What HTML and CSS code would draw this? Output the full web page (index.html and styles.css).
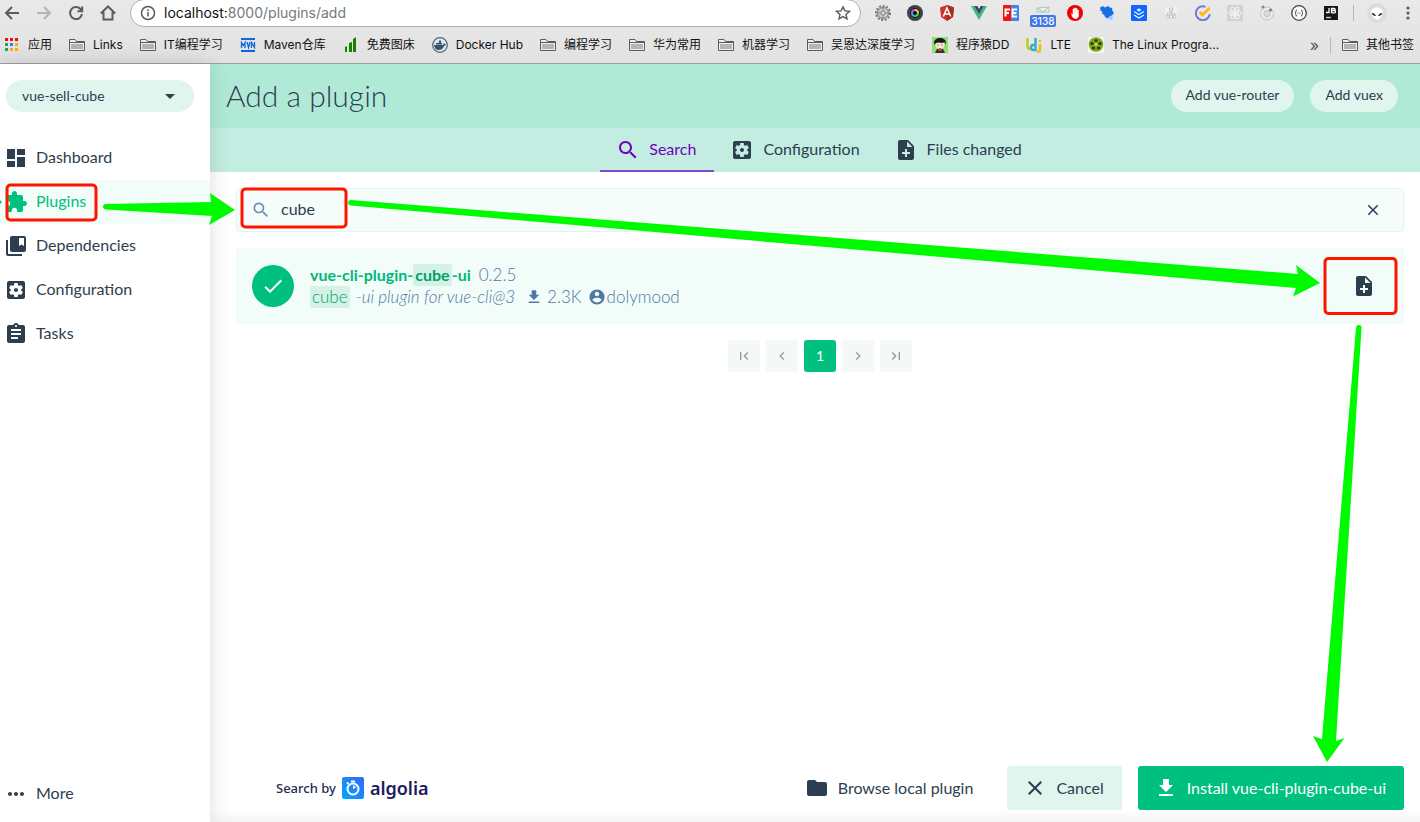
FILE: index.html
```html
<!DOCTYPE html>
<html lang="zh-CN">
<head>
<meta charset="utf-8">
<title>Add a plugin</title>
<link rel="stylesheet" href="styles.css">
</head>
<body>
<svg class="sprite" aria-hidden="true">
  <symbol id="dashboard" viewBox="0 0 24 24"><path d="M3 13h8V3H3v10zm0 8h8v-6H3v6zm10 0h8V11h-8v10zm0-18v6h8V3h-8z"/></symbol>
  <symbol id="extension" viewBox="0 0 24 24"><path d="M20.5 11H19V7c0-1.1-.9-2-2-2h-4V3.500C13 2.120 11.880 1 10.500 1S8 2.120 8 3.500V5H4c-1.100 0-1.990.900-1.990 2v3.800H3.500c1.490 0 2.700 1.210 2.700 2.700s-1.210 2.700-2.700 2.700H2V20c0 1.100.900 2 2 2h3.800v-1.500c0-1.490 1.210-2.700 2.700-2.700 1.490 0 2.700 1.210 2.700 2.700V22H17c1.100 0 2-.900 2-2v-4h1.500c1.380 0 2.500-1.120 2.500-2.500S21.880 11 20.500 11z"/></symbol>
  <symbol id="collections" viewBox="0 0 24 24"><path d="M4 6H2v14c0 1.100.900 2 2 2h14v-2H4V6z"/><path d="M20 2H8c-1.100 0-2 .900-2 2v12c0 1.100.900 2 2 2h12c1.100 0 2-.900 2-2V4c0-1.100-.900-2-2-2zm0 10l-2.500-1.500L15 12V4h5v8z"/></symbol>
  <symbol id="settings" viewBox="0 0 24 24"><path d="M12 10c-1.100 0-2 .9-2 2s.9 2 2 2 2-.9 2-2-.9-2-2-2zm7-7H5c-1.110 0-2 .9-2 2v14c0 1.100.89 2 2 2h14c1.110 0 2-.9 2-2V5c0-1.100-.89-2-2-2zm-1.750 9c0 .23-.02.46-.05.68l1.480 1.160c.13.11.17.3.08.45l-1.400 2.420c-.09.15-.27.21-.43.15l-1.740-.7c-.36.28-.76.51-1.180.69l-.26 1.850c-.03.17-.18.3-.35.3h-2.800c-.17 0-.32-.13-.35-.29l-.26-1.850c-.43-.18-.82-.41-1.180-.69l-1.740.7c-.16.06-.34 0-.43-.15l-1.400-2.420c-.09-.15-.05-.34.08-.45l1.480-1.160c-.03-.23-.05-.46-.05-.69 0-.23.02-.46.05-.68l-1.480-1.160c-.13-.11-.17-.3-.08-.45l1.400-2.420c.09-.15.27-.21.43-.15l1.740.7c.36-.28.76-.51 1.180-.69l.26-1.850c.03-.17.18-.3.35-.3h2.800c.17 0 .32.13.35.29l.26 1.850c.43.18.82.41 1.180.69l1.740-.7c.16-.06.34 0 .43.15l1.400 2.420c.09.15.05.34-.08.45l-1.480 1.160c.03.23.05.46.05.69z"/></symbol>
  <symbol id="assignment" viewBox="0 0 24 24"><path d="M19 3h-4.180C14.400 1.840 13.300 1 12 1c-1.300 0-2.400.84-2.820 2H5c-1.100 0-2 .9-2 2v14c0 1.100.9 2 2 2h14c1.100 0 2-.9 2-2V5c0-1.100-.9-2-2-2zm-7 0c.55 0 1 .45 1 1s-.45 1-1 1-1-.45-1-1 .45-1 1-1zm2 14H7v-2h7v2zm3-4H7v-2h10v2zm0-4H7V7h10v2z"/></symbol>
  <symbol id="noteadd" viewBox="0 0 24 24"><path d="M14 2H6c-1.100 0-1.990.9-1.990 2L4 20c0 1.100.89 2 1.990 2H18c1.100 0 2-.9 2-2V8l-6-6zm2 14h-3v3h-2v-3H8v-2h3v-3h2v3h3v2zm-3-7V3.500L18.500 9H13z"/></symbol>
  <symbol id="search" viewBox="0 0 24 24"><path d="M15.500 14h-.79l-.28-.27C15.410 12.590 16 11.110 16 9.500 16 5.910 13.090 3 9.500 3S3 5.910 3 9.500 5.910 16 9.500 16c1.610 0 3.090-.59 4.230-1.570l.27.28v.79l5 4.990L20.490 19l-4.990-5zm-6 0C7.010 14 5 11.990 5 9.500S7.010 5 9.500 5 14 7.010 14 9.500 11.990 14 9.500 14z"/></symbol>
  <symbol id="download" viewBox="0 0 24 24"><path d="M19 9h-4V3H9v6H5l7 7 7-7zM5 18v2h14v-2H5z"/></symbol>
  <symbol id="account" viewBox="0 0 24 24"><path d="M12 2C6.480 2 2 6.480 2 12s4.480 10 10 10 10-4.480 10-10S17.520 2 12 2zm0 3c1.660 0 3 1.340 3 3s-1.340 3-3 3-3-1.340-3-3 1.340-3 3-3zm0 14.200c-2.500 0-4.710-1.280-6-3.220.03-1.990 4-3.080 6-3.080 1.990 0 5.970 1.090 6 3.080-1.290 1.940-3.500 3.220-6 3.220z"/></symbol>
  <symbol id="close" viewBox="0 0 24 24"><path d="M19 6.410L17.590 5 12 10.590 6.410 5 5 6.410 10.590 12 5 17.590 6.410 19 12 13.410 17.590 19 19 17.590 13.410 12z"/></symbol>
  <symbol id="done" viewBox="0 0 24 24"><path d="M9 16.200L4.800 12l-1.400 1.400L9 19 21 7l-1.400-1.400L9 16.200z"/></symbol>
  <symbol id="more" viewBox="0 0 24 24"><path d="M6 10c-1.100 0-2 .9-2 2s.9 2 2 2 2-.9 2-2-.9-2-2-2zm12 0c-1.100 0-2 .9-2 2s.9 2 2 2 2-.9 2-2-.9-2-2-2zm-6 0c-1.100 0-2 .9-2 2s.9 2 2 2 2-.9 2-2-.9-2-2-2z"/></symbol>
  <symbol id="folder" viewBox="0 0 24 24"><path d="M10 4H4c-1.100 0-1.990.9-1.990 2L2 18c0 1.100.9 2 2 2h16c1.100 0 2-.9 2-2V8c0-1.100-.9-2-2-2h-8l-2-2z"/></symbol>
  <symbol id="dropdown" viewBox="0 0 24 24"><path d="M7 10l5 5 5-5z"/></symbol>
  <symbol id="first" viewBox="0 0 24 24"><path d="M18.410 16.590L13.820 12l4.590-4.590L17 6l-6 6 6 6zM6 6h2v12H6z"/></symbol>
  <symbol id="prev" viewBox="0 0 24 24"><path d="M15.410 7.410L14 6l-6 6 6 6 1.410-1.410L10.830 12z"/></symbol>
  <symbol id="next" viewBox="0 0 24 24"><path d="M10 6L8.590 7.410 13.170 12l-4.580 4.590L10 18l6-6z"/></symbol>
  <symbol id="last" viewBox="0 0 24 24"><path d="M5.590 7.410L10.180 12l-4.590 4.590L7 18l6-6-6-6zM16 6h2v12h-2z"/></symbol>
  <symbol id="bmfolder" viewBox="0 0 16 16"><path d="M.5 13.500v-11h5.500l1.500 2h8v9z" fill="#eee" stroke="#5c5c5c"/><path d="M2 7h12v5H2z" fill="#b5b5b5"/><path d="M.5 5.500h15" stroke="#5c5c5c"/></symbol>
</svg>

<header class="browser">
  <div class="toolbar">
    <nav class="history" aria-label="Browser">
      <button aria-label="Back"><svg class="nav-icon" viewBox="0 0 16 16"><path d="M15 8H2M8 2L2 8l6 6"/></svg></button>
      <button aria-label="Forward"><svg class="nav-icon faded" viewBox="0 0 16 16"><path d="M1 8h13M8 2l6 6-6 6"/></svg></button>
      <button aria-label="Reload"><svg class="nav-icon" viewBox="0 0 16 16"><path d="M14 9A6 6 0 1 1 12.500 4L14 5.500M14.200 1.500v4.700H9.500"/></svg></button>
      <button aria-label="Home"><svg class="nav-icon" viewBox="0 0 16 16"><path d="M.8 8.500L8 1.500l7.200 7M3.500 7v7.500h9V7"/></svg></button>
    </nav>
    <div class="address">
      <svg class="i16" viewBox="0 0 16 16" fill="none" stroke="#5a5a5a" stroke-width="1.500"><circle cx="8" cy="8" r="6.500"/><path d="M8 7v4.500M8 4.300v1.600"/></svg>
      <span class="url">localhost:<span class="url-rest">8000/plugins/add</span></span>
      <svg class="i16" viewBox="0 0 16 16" fill="none" stroke="#5a5a5a" stroke-width="1.400"><path d="M8 1.800l1.900 4.100 4.500.5-3.400 3 1 4.500L8 11.600l-4 2.300 1-4.500-3.400-3 4.500-.5z"/></svg>
    </div>
    <div class="extensions">
      <svg class="i16" viewBox="0 0 16 16"><circle cx="8" cy="8" r="7" fill="none" stroke="#777" stroke-width="2" stroke-dasharray="2 1.600"/><circle cx="8" cy="8" r="5.500" fill="#ccc" stroke="#777"/><circle cx="8" cy="8" r="2" fill="#eee" stroke="#777"/><path d="M8 2.500V6M8 10v3.500M2.500 8H6M10 8h3.500" stroke="#888"/></svg>
      <svg class="i16" viewBox="0 0 16 16"><circle cx="8" cy="8" r="8" fill="#3c414a"/><circle cx="8" cy="8" r="4.800" fill="#111"/><g fill="none" stroke-width="2"><path d="M5 8a3 3 0 0 1 3-3" stroke="#e04adf"/><path d="M8 5a3 3 0 0 1 3 3" stroke="#ffc928"/><path d="M11 8a3 3 0 0 1-3 3" stroke="#35df51"/><path d="M8 11a3 3 0 0 1-3-3" stroke="#26a9ff"/></g></svg>
      <svg class="i16" viewBox="0 0 16 16"><path d="M8 0l7 2.500-1 9.500-6 4-6-4L1 2.500z" fill="#cf3229"/><path d="M8 0l7 2.500-1 9.500-6 4z" fill="#a92b25"/><path d="M4.300 11.500L8 3l3.700 8.500M5.700 9h4.600" fill="none" stroke="#fff" stroke-width="1.500"/></svg>
      <svg class="i16" viewBox="0 0 16 16"><path d="M0 1h3.500L8 9l4.500-8H16L8 15z" fill="#41b883"/><path d="M3.300 1h3L8 4l1.700-3h3L8 9.200z" fill="#35495e"/></svg>
      <svg class="i16" viewBox="0 0 16 16"><path d="M1 0h7v16H1a1 1 0 0 1-1-1V1a1 1 0 0 1 1-1z" fill="#f21313"/><path d="M8 0h7a1 1 0 0 1 1 1v14a1 1 0 0 1-1 1H8z" fill="#4285e8"/><path d="M7 4.500H2.500v7M2.500 8H6M14 4.500H9.500v7H14M9.500 8h4" fill="none" stroke="#fff" stroke-width="2"/></svg>
      <span class="ext-badge"><svg class="i16" viewBox="0 0 16 16"><path d="M2 3l12-1v5H2z" fill="#ecefec" stroke="#a9c9b8"/><path d="M2 3l6 4 6-5" fill="none" stroke="#9fc3b0"/></svg><b>3138</b></span>
      <svg class="i16" viewBox="0 0 16 16"><circle cx="8" cy="8" r="8" fill="#f00000"/><path d="M4.500 8.500l1 3.500 2 1.500h2.500l1.500-2V5h-1v3h-.5V3.500H9V8h-.5V3H7.300v5H7V4H6v6z" fill="#fff" stroke="#fff" stroke-width=".6"/></svg>
      <svg class="i16" viewBox="0 0 16 16"><path d="M9 9h7v7H6z" fill="#d8e9fb"/><path d="M1 2.500L4 1l2 1.500L9 1l2 1.500 2 .5.500 3L15 8l-2 2.500-2 .5-2 2.500-3-1.500-1-2.500L3 9l.5-2-2-1.500z" fill="#1670e5"/><path d="M11 11l3 1-1 3-3-1z" fill="#95c9ff"/></svg>
      <svg class="i16" viewBox="0 0 16 16"><rect width="16" height="16" rx="1" fill="#1264ff"/><path d="M8 4l1.500 1L8 6 6.500 5zM3 6.500L8 9.500l5-3M3 10l5 3 5-3" fill="none" stroke="#dff" stroke-width="1.200"/></svg>
      <svg class="i16" viewBox="0 0 16 16"><rect x="2" y="2" width="12" height="12" rx="1" fill="#f1f1f1"/><path d="M6.500 3h3v3h-3zM3 10h3v3H3zM6.500 10h3v3h-3zM10 10h3v3h-3zM8 6v4M4.500 10V8h7v2" fill="none" stroke="#c0c0c0"/></svg>
      <svg class="i16" viewBox="0 0 16 16"><path d="M10.500 1.700A7 7 0 1 0 14.800 9" fill="none" stroke="#6b78e5" stroke-width="2"/><path d="M4.500 7l3 3L14.500 3" fill="none" stroke="#ffb900" stroke-width="2.600"/></svg>
      <svg class="i16" viewBox="0 0 16 16"><rect width="16" height="16" rx="1" fill="#d2d2d2"/><g fill="none" stroke="#f4f4f4"><ellipse cx="8" cy="8" rx="6.500" ry="2.500"/><ellipse cx="8" cy="8" rx="6.500" ry="2.500" transform="rotate(60 8 8)"/><ellipse cx="8" cy="8" rx="6.500" ry="2.500" transform="rotate(120 8 8)"/></g><circle cx="8" cy="8" r="1.500" fill="#fff"/></svg>
      <svg class="i16" viewBox="0 0 16 16"><circle cx="8" cy="8.500" r="6.500" fill="#ececec" stroke="#c4c4c4"/><circle cx="8" cy="8.500" r="3" fill="#ddd" stroke="#bbb"/><circle cx="4" cy="2" r="1.500" fill="#888"/><circle cx="11.500" cy="5" r="1.500" fill="#777"/></svg>
      <svg class="i16" viewBox="0 0 16 16"><circle cx="8" cy="8" r="7.300" fill="#fafafa" stroke="#444" stroke-width="1.300"/><path d="M6 5c-2 0-.5 2.500-2 3 1.500.5 0 3 2 3M10 5c2 0 .5 2.500 2 3-1.500.5 0 3-2 3" fill="none" stroke="#444"/><path d="M6.500 8h3" stroke="#444" stroke-dasharray="1 1"/></svg>
      <svg class="i16" viewBox="0 0 16 16"><rect x="1" y="1" width="14" height="14" fill="#161616"/><path d="M6 3v4.500H3M8.500 8V3.500h2.700c1.300 0 1.300 2 0 2H8.500h3c1.400 0 1.400 2.300 0 2.300h-3" fill="none" stroke="#fff" stroke-width="1.300"/><path d="M3 12.500h5" stroke="#ccc" stroke-width="1.400"/></svg>
    </div>
    <span class="divider"></span>
    <svg class="avatar" viewBox="0 0 20 20"><circle cx="10" cy="10" r="10" fill="#dcdcdc"/><path d="M4 9c0-6 12-6 12 0 0 3-3 7-6 8-3-1-6-5-6-8z" fill="#fff"/><path d="M4.500 10c2 0 4 1 4.500 3-2 0-4-1-4.500-3zM15.500 10c-2 0-4 1-4.500 3 2 0 4-1 4.500-3z" fill="#222"/></svg>
    <button class="menu-dots" aria-label="Menu"><svg class="i16" viewBox="0 0 16 16" fill="#5a5a5a"><circle cx="8" cy="3" r="1.600"/><circle cx="8" cy="8" r="1.600"/><circle cx="8" cy="13" r="1.600"/></svg></button>
  </div>
  <nav class="bookmarks" aria-label="Bookmarks">
    <a href="#"><svg class="i16" viewBox="0 0 16 16"><path d="M1 1h3v3H1zM6 1h3v3H6zM11 1h3v3h-3z" fill="#f30d00"/><path d="M1 6h3v3H1zM1 11h3v3H1z" fill="#16a765"/><path d="M6 6h3v3H6z" fill="#1888ff"/><path d="M11 6h3v3h-3zM6 11h3v3H6zM11 11h3v3h-3z" fill="#ffae00"/></svg>应用</a>
    <a href="#"><svg class="i16"><use href="#bmfolder"/></svg>Links</a>
    <a href="#"><svg class="i16"><use href="#bmfolder"/></svg>IT编程学习</a>
    <a href="#"><svg class="i16" viewBox="0 0 16 16" fill="none" stroke="#0a68d8"><path d="M1 2h14M1 14h14" stroke-width="2"/><path d="M1.500 11V5.500l1.800 3 1.700-3V11M7 5l1.500 5.500L10 5M11.500 11V5.500l3 5V5" stroke-width="1.300"/></svg>Maven仓库</a>
    <a href="#"><svg class="i16" viewBox="0 0 16 16" fill="#178000"><path d="M2 10l2-1v6H2zM6 6l3-1v10H6zM10 2l3-2v15h-3z"/></svg>免费图床</a>
    <a href="#"><svg class="i16" viewBox="0 0 16 16"><circle cx="8" cy="8" r="7.300" fill="#dce6eb" stroke="#4a6577" stroke-width="1.200"/><path d="M2 8h9l1-2 1 1.500h1.500c-1 1-2 1-2.500 1.500-1 3-3 4-5.500 4-2.500 0-4-2-4.500-5zM4 6h6v1.500H4zM7 3.500h2V6H7z" fill="#33536b"/></svg>Docker Hub</a>
    <a href="#"><svg class="i16"><use href="#bmfolder"/></svg>编程学习</a>
    <a href="#"><svg class="i16"><use href="#bmfolder"/></svg>华为常用</a>
    <a href="#"><svg class="i16"><use href="#bmfolder"/></svg>机器学习</a>
    <a href="#"><svg class="i16"><use href="#bmfolder"/></svg>吴恩达深度学习</a>
    <a href="#"><svg class="i16" viewBox="0 0 16 16"><path d="M0 0h16v16H0z" fill="#8ee070"/><circle cx="8" cy="7.500" r="4.500" fill="#ffe7d5"/><path d="M2.500 8C1 3 4 1 8 1s7 2 5.500 7l-1-3-2 1-5-.5-2 1z" fill="#1b1b1b"/><path d="M3 16l2-4h6l2 4z" fill="#2d3440"/><path d="M7 11h2l.5 3h-3z" fill="#e43"/><path d="M5.500 8h1M9.500 8h1" stroke="#222"/></svg>程序猿DD</a>
    <a href="#"><svg class="i16" viewBox="0 0 16 16" fill="none" stroke-width="2.400"><path d="M1.500 1v8q0 3 3 3" stroke="#b8cf13"/><path d="M9.500 1v12H7.300c-3 0-3-5 0-5h2" stroke="#38a8cb"/><path d="M14 7v5q0 3-3 3M14 3v2" stroke="#f2ba16"/></svg>LTE</a>
    <a href="#"><svg class="i16" viewBox="0 0 16 16"><path d="M0 0h16v16H0z" fill="#f4f6e9"/><circle cx="8" cy="7.500" r="7.300" fill="#7fa51d"/><g fill="#2c3c08"><circle cx="8" cy="3.500" r="1.600"/><circle cx="4" cy="6.500" r="1.600"/><circle cx="5.500" cy="11" r="1.600"/><circle cx="10.500" cy="11" r="1.600"/><circle cx="12" cy="6.500" r="1.600"/></g><circle cx="8" cy="7.500" r="1.500" fill="#c8e45f"/></svg>The Linux Progra...</a>
    <span class="spacer"></span>
    <button class="overflow" aria-label="More bookmarks">»</button>
    <span class="divider"></span>
    <a href="#"><svg class="i16"><use href="#bmfolder"/></svg>其他书签</a>
  </nav>
</header>

<div class="app">
  <aside class="sidebar">
    <button class="project">vue-sell-cube<svg class="i24"><use href="#dropdown"/></svg></button>
    <nav class="menu">
      <a href="#"><svg class="i24"><use href="#dashboard"/></svg><span>Dashboard</span></a>
      <a href="#" class="active"><svg class="i24"><use href="#extension"/></svg><span>Plugins</span></a>
      <a href="#"><svg class="i24"><use href="#collections"/></svg><span>Dependencies</span></a>
      <a href="#"><svg class="i24"><use href="#settings"/></svg><span>Configuration</span></a>
      <a href="#"><svg class="i24"><use href="#assignment"/></svg><span>Tasks</span></a>
      <a href="#" class="menu-more"><svg class="i24"><use href="#more"/></svg><span>More</span></a>
    </nav>
  </aside>
  <main class="content">
    <div class="titlebar">
      <h1>Add a plugin</h1>
      <button class="pill">Add vue-router</button>
      <button class="pill">Add vuex</button>
    </div>
    <div class="tabs" role="tablist">
      <button role="tab" aria-selected="true" class="tab selected"><svg class="i24"><use href="#search"/></svg><span>Search</span></button>
      <button role="tab" class="tab"><svg class="i24"><use href="#settings"/></svg><span>Configuration</span></button>
      <button role="tab" class="tab"><svg class="i24"><use href="#noteadd"/></svg><span>Files changed</span></button>
    </div>
    <div class="panel">
      <div class="searchbox">
        <svg class="i20 muted"><use href="#search"/></svg>
        <input type="text" value="cube" aria-label="Search for a plugin">
        <button class="clear" aria-label="Clear"><svg class="i18"><use href="#close"/></svg></button>
      </div>
      <article class="result">
        <span class="check"><svg class="i24"><use href="#done"/></svg></span>
        <div class="info">
          <div class="line"><strong>vue-cli-plugin-<mark>cube</mark>-ui</strong><span class="version">0.2.5</span></div>
          <div class="line"><mark>cube</mark><em>-ui plugin for vue-cli@3</em><svg class="i18 dl"><use href="#download"/></svg><span class="count">2.3K</span><svg class="i18"><use href="#account"/></svg><span class="owner">dolymood</span></div>
        </div>
        <button class="add-file" aria-label="Add plugin file"><svg class="i24"><use href="#noteadd"/></svg></button>
      </article>
      <nav class="pages" aria-label="Pages">
        <button aria-label="First"><svg class="i16"><use href="#first"/></svg></button>
        <button aria-label="Previous"><svg class="i16"><use href="#prev"/></svg></button>
        <button class="current">1</button>
        <button aria-label="Next"><svg class="i16"><use href="#next"/></svg></button>
        <button aria-label="Last"><svg class="i16"><use href="#last"/></svg></button>
      </nav>
    </div>
    <footer class="actions">
      <a href="#" class="algolia"><span>Search by</span><svg class="algolia-mark" viewBox="0 0 22 22"><defs><linearGradient id="blue" x1="0" y1="1" x2="1" y2="0"><stop stop-color="#00a8ff"/><stop offset="1" stop-color="#3369f5"/></linearGradient></defs><rect width="22" height="22" rx="2" fill="url(#blue)"/><circle cx="11" cy="12" r="5.500" fill="none" stroke="#fff" stroke-width="2"/><path d="M11 12V8.500a3.500 3.500 0 0 1 3 2z" fill="#fff"/><path d="M9 4.500h4M5 7l1.500-1.500" stroke="#fff" stroke-width="2"/></svg><b>algolia</b></a>
      <button class="btn"><svg class="i24"><use href="#folder"/></svg>Browse local plugin</button>
      <button class="btn soft"><svg class="i24"><use href="#close"/></svg>Cancel</button>
      <button class="btn primary"><svg class="i24"><use href="#download"/></svg>Install vue-cli-plugin-cube-ui</button>
    </footer>
  </main>
</div>

<svg class="annotations" width="1420" height="822" viewBox="0 0 1420 822" aria-hidden="true">
  <g fill="none" stroke="#ff1400" stroke-width="3"><rect x="7" y="185" width="89" height="35" rx="3.500"/><rect x="242" y="189" width="104" height="38" rx="3.500"/><rect x="1325" y="258.500" width="71" height="55" rx="3.500"/></g>
  <g fill="#00fa00">
    <path d="M106 204L211 202L210 193L235 210L209 225L212 216L106 209.500Q103 209 103 206.500T106 204z"/>
    <path d="M351 200L1298 274L1296 265L1320 283L1293 296.500L1296 288L351 205.500Q348 205 348 202.500T351 200z"/>
    <path d="M1356 328Q1356 325 1359 325T1361.500 328L1336 741L1344.500 738L1327 762L1313 736L1322 739z"/>
  </g>
</svg>
</body>
</html>
```
FILE: styles.css
```css
* { box-sizing: border-box; }
body {
  margin: 0;
  min-height: 100vh;
  display: flex;
  flex-direction: column;
  position: relative;
  background: #fff;
  color: #2c3e50;
  font: 16px/22px Lato, "Noto Sans CJK SC", sans-serif;
}
button, input { font: inherit; color: inherit; border: 0; background: none; padding: 0; }
a { color: inherit; text-decoration: none; }
svg { flex: none; display: block; }
svg:not([fill]) { fill: currentColor; }
.sprite { position: absolute; width: 0; height: 0; }
.i16 { width: 16px; height: 16px; }
.i18 { width: 18px; height: 18px; }
.i20 { width: 20px; height: 20px; }
.i24 { width: 24px; height: 24px; }

/* Browser chrome */
.browser {
  height: 64px;
  border-bottom: 1px solid #a0a0a0;
  background: linear-gradient(#e9e9e9, #e2e2e2);
  color: #111;
  font-family: Inter, "Noto Sans CJK SC", sans-serif;
}
.toolbar { display: flex; align-items: center; height: 26px; padding-right: 4px; }
.history { display: flex; gap: 16px; padding: 0 14px 0 4px; }
.nav-icon { width: 16px; height: 16px; stroke: #5a5c60; stroke-width: 2; }
.nav-icon:not([fill]) { fill: none; }
.faded { stroke: #b4b4b4; }
.address {
  flex: 1;
  display: flex;
  align-items: center;
  gap: 8px;
  height: 28px;
  padding: 0 9px;
  border: 1px solid #aeaeae;
  border-radius: 14px;
  background: #fff;
}
.url { flex: 1; font-size: 14px; }
.url-rest { color: #76797d; }
.extensions { display: flex; gap: 16px; padding: 0 14px; }
.ext-badge { position: relative; width: 16px; height: 16px; }
.ext-badge b {
  position: absolute;
  left: -5px;
  top: 10px;
  width: 26px;
  border-radius: 2px;
  background: #3f76e8;
  color: #fff;
  font-size: 10px;
  line-height: 12px;
  font-weight: 500;
  text-align: center;
}
.divider { width: 1px; height: 16px; background: #b5b5b5; }
.avatar { width: 20px; height: 20px; margin: 0 13px; }
.bookmarks { display: flex; align-items: center; gap: 17px; height: 37px; padding: 0 6px 0 4px; font-size: 12px; white-space: nowrap; }
.bookmarks a { display: flex; align-items: center; gap: 8px; }
.spacer { flex: 1; }
.overflow { font-size: 16px; color: #555; }
.bookmarks .divider { margin: 0 -6px; }

/* Application */
.app { flex: 1; display: flex; }
.sidebar {
  width: 210px;
  display: flex;
  flex-direction: column;
  padding: 16px 0 6px;
  background: #fff;
  box-shadow: 0 0 20px rgba(0, 0, 0, .14);
  z-index: 1;
}
.project {
  display: flex;
  align-items: center;
  justify-content: space-between;
  height: 32px;
  margin: 0 16px 24px 6px;
  padding: 0 12px 0 16px;
  border-radius: 16px;
  background: #e0f5ed;
  font-size: 14px;
}
.menu { flex: 1; display: flex; flex-direction: column; }
.menu a { display: flex; align-items: center; gap: 8px; height: 44px; padding-left: 4px; }
.menu span, .tab span { padding-bottom: 2px; }
.menu .active {
  background: radial-gradient(circle at 0 50%, #00c080 1px, transparent 2px) #f2fcf8;
  color: #00c080;
}
.menu .menu-more { margin-top: auto; }
.content { flex: 1; min-width: 0; display: flex; flex-direction: column; }
.titlebar { display: flex; align-items: center; gap: 16px; height: 64px; padding: 0 22px 0 16px; background: #b0ead7; }
h1 { flex: 1; margin: 0; padding-bottom: 2px; font-size: 30px; line-height: 36px; font-weight: 300; }
.pill { height: 32px; padding: 0 15px 2px; border-radius: 16px; background: #e0f5ed; font-size: 14px; }
.tabs { display: flex; justify-content: center; height: 44px; padding-left: 10px; background: #c2ede0; }
.tab { display: flex; align-items: center; gap: 9px; padding: 0 18px 0 16px; }
.selected { color: #7200c4; box-shadow: inset 0 -2px #8e44cf; }
.panel { flex: 1; padding: 16px 16px 0 26px; }
.searchbox {
  display: flex;
  align-items: center;
  height: 44px;
  padding: 0 21px 0 14px;
  border: 1px solid #e0f5ed;
  border-radius: 3px;
  background: #f5fcfa;
}
.searchbox input { flex: 1; min-width: 0; padding: 0 0 2px 10px; outline: 0; }
.muted { color: #6b90b8; }
.result { display: flex; align-items: center; height: 76px; margin: 16px 0; padding: 0 28px 0 16px; background: #f2fcf8; }
.check { display: grid; place-items: center; width: 42px; height: 42px; border-radius: 50%; background: #00c080; color: #fff; }
.info { flex: 1; padding-left: 16px; font-size: 17px; font-weight: 300; color: #4f78a4; }
.line { display: flex; align-items: center; height: 22px; }
.line strong { font-size: 16px; font-weight: 700; color: #00b87a; }
mark { display: inline-block; padding: 0 2px; border-radius: 3px; background: #d4f2e6; color: #00a06b; }
.version { margin-left: 8px; }
.line em { margin-left: 6px; }
.dl { margin-left: 10px; }
.count { margin: 0 6px 0 4px; }
.owner { margin-left: 1px; }
.pages { display: flex; justify-content: center; gap: 6px; }
.pages button { display: grid; place-items: center; width: 32px; height: 32px; border-radius: 3px; background: #f4f8f7; color: #909a9e; font-size: 14px; }
.pages .current { background: #00c080; color: #fff; }
.actions {
  display: flex;
  align-items: center;
  gap: 16px;
  padding: 12px 16px 12px 66px;
  background: linear-gradient(to top, #f3f3f3, #fff 12px);
}
.algolia { display: flex; align-items: center; gap: 6px; margin-right: auto; color: #1f2a55; font: 500 13px/22px "Noto Sans", sans-serif; }
.algolia b { font-size: 18px; font-weight: 600; color: #1d1b5c; }
.algolia-mark { width: 22px; height: 22px; }
.btn { display: flex; align-items: center; gap: 9px; height: 44px; padding: 0 18px 0 16px; border-radius: 3px; white-space: nowrap; }
.soft { background: #e0f5ed; }
.primary { background: #00c080; color: #fff; }
.annotations { position: absolute; left: 0; top: 0; z-index: 2; pointer-events: none; }
```
